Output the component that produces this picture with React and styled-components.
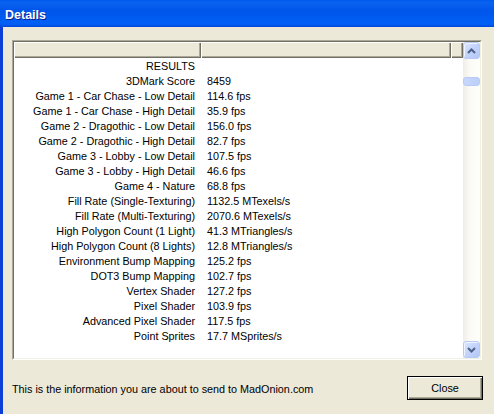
import React from "react";
import styled, { createGlobalStyle } from "styled-components";

const Global = createGlobalStyle`
  html, body { margin: 0; padding: 0; background: #ECE9D8; }
  body { font-family: "Liberation Sans", Arial, sans-serif; }
`;

const Window = styled.div`
  width: 494px;
  height: 414px;
  display: flex;
  flex-direction: column;
  background: #ECE9D8;
  box-sizing: border-box;
  overflow: hidden;
`;

const TitleBar = styled.div`
  height: 27px;
  flex: none;
  display: flex;
  align-items: center;
  padding: 2px 0 0 5px;
  box-sizing: border-box;
  background: linear-gradient(
    to bottom,
    #0058EE 0%,
    #0A62F0 10%,
    #0055EA 40%,
    #0060F6 85%,
    #005AF0 92%,
    #0045D8 100%
  );
`;

const Title = styled.span`
  color: #fff;
  font: bold 12.5px "Liberation Sans", Arial, sans-serif;
  text-shadow: 1px 1px 0 #0F1F8F;
`;

const Body = styled.div`
  flex: 1;
  display: flex;
  flex-direction: column;
  border-left: 3px solid;
  border-image: linear-gradient(to right, #0B3FD6, #1C5BE8, #6F8FDF) 1;
  padding: 13px 12px 0 9px;
  min-height: 0;
`;

const ListBox = styled.div`
  height: 320px;
  box-sizing: border-box;
  border-top: 1px solid #ACA899;
  border-left: 1px solid #ACA899;
  border-right: 1px solid #fff;
  border-bottom: 1px solid #fff;
  flex: none;
`;

const ListInner = styled.div`
  height: 100%;
  box-sizing: border-box;
  border-top: 1px solid #716F64;
  border-left: 1px solid #716F64;
  border-right: 1px solid #F1EFE2;
  border-bottom: 1px solid #F1EFE2;
  background: #fff;
  display: grid;
  grid-template-columns: 1fr 17px;
`;

const Pane = styled.div`
  display: flex;
  flex-direction: column;
  min-width: 0;
`;

const HeaderRow = styled.div`
  display: grid;
  grid-template-columns: 187px 250px 1fr;
  height: 16px;
  flex: none;
`;

const HeaderCell = styled.div`
  background: #ECE9D8;
  box-sizing: border-box;
  box-shadow: inset 1px 1px 0 #fff, inset -1px -1px 0 #716F64, inset -2px -2px 0 #ACA899;
`;

const Row = styled.div`
  display: grid;
  grid-template-columns: 187px 1fr;
  height: 15px;
  align-items: center;
  font-size: 10.8px;
  color: #000;
  white-space: nowrap;
`;

const Label = styled.span`
  text-align: right;
  padding-right: 6px;
`;

const Value = styled.span`
  padding-left: 6px;
`;

const Rows = styled.div`
  padding-top: 0;
`;

const ScrollBar = styled.div`
  display: flex;
  flex-direction: column;
  background: linear-gradient(to right, #EEEDE5, #FBFAF6 40%, #FEFEFB);
`;

const ScrollButton = styled.div`
  width: 17px;
  height: 17px;
  flex: none;
  box-sizing: border-box;
  border: 1px solid #B8CAF3;
  border-radius: 3px;
  background: linear-gradient(to bottom right, #DCE6FD, #C2D3FB 50%, #B3C8F6);
  box-shadow: inset 1px 1px 0 #EEF3FE;
  display: flex;
  align-items: center;
  justify-content: center;
`;

const Track = styled.div`
  flex: 1;
`;

const Thumb = styled.div`
  margin-top: 18px;
  height: 9px;
  width: 17px;
  box-sizing: border-box;
  border: 1px solid #B8CAF3;
  border-radius: 3px;
  background: linear-gradient(to right, #C8D7FC, #BCD0FA);
`;

const Footer = styled.div`
  flex: 1;
  display: flex;
  align-items: flex-start;
  justify-content: space-between;
  padding-top: 16px;
`;

const Note = styled.span`
  font-size: 10.8px;
  color: #000;
  margin-top: 7px;
`;

const CloseButton = styled.button`
  width: 76px;
  height: 24px;
  margin-right: -1px;
  background: #ECE9D8;
  border: 1px solid #000;
  box-shadow: inset 1px 1px 0 #fff, inset -1px -1px 0 #716F64, inset -2px -2px 0 #ACA899;
  font: 10.8px "Liberation Sans", Arial, sans-serif;
  color: #000;
  padding: 0;
`;

const Chevron = ({ up }) => (
  <svg width="9" height="6" viewBox="0 0 9 6">
    <path
      d={up ? "M1 5 L4.5 1.5 L8 5" : "M1 1 L4.5 4.5 L8 1"}
      fill="none"
      stroke="#4D6185"
      strokeWidth="2"
    />
  </svg>
);

const rows = [
  ["RESULTS", ""],
  ["3DMark Score", "8459"],
  ["Game 1 - Car Chase - Low Detail", "114.6 fps"],
  ["Game 1 - Car Chase - High Detail", "35.9 fps"],
  ["Game 2 - Dragothic - Low Detail", "156.0 fps"],
  ["Game 2 - Dragothic - High Detail", "82.7 fps"],
  ["Game 3 - Lobby - Low Detail", "107.5 fps"],
  ["Game 3 - Lobby - High Detail", "46.6 fps"],
  ["Game 4 - Nature", "68.8 fps"],
  ["Fill Rate (Single-Texturing)", "1132.5 MTexels/s"],
  ["Fill Rate (Multi-Texturing)", "2070.6 MTexels/s"],
  ["High Polygon Count (1 Light)", "41.3 MTriangles/s"],
  ["High Polygon Count (8 Lights)", "12.8 MTriangles/s"],
  ["Environment Bump Mapping", "125.2 fps"],
  ["DOT3 Bump Mapping", "102.7 fps"],
  ["Vertex Shader", "127.2 fps"],
  ["Pixel Shader", "103.9 fps"],
  ["Advanced Pixel Shader", "117.5 fps"],
  ["Point Sprites", "17.7 MSprites/s"],
];

export default function App() {
  return (
    <Window>
      <Global />
      <TitleBar>
        <Title>Details</Title>
      </TitleBar>
      <Body>
        <ListBox>
          <ListInner>
            <Pane>
              <HeaderRow>
                <HeaderCell />
                <HeaderCell />
                <HeaderCell />
              </HeaderRow>
              <Rows>
                {rows.map(([l, v]) => (
                  <Row key={l}>
                    <Label>{l}</Label>
                    <Value>{v}</Value>
                  </Row>
                ))}
              </Rows>
            </Pane>
            <ScrollBar>
              <ScrollButton>
                <Chevron up />
              </ScrollButton>
              <Track>
                <Thumb />
              </Track>
              <ScrollButton>
                <Chevron />
              </ScrollButton>
            </ScrollBar>
          </ListInner>
        </ListBox>
        <Footer>
          <Note>This is the information you are about to send to MadOnion.com</Note>
          <CloseButton>Close</CloseButton>
        </Footer>
      </Body>
    </Window>
  );
}
